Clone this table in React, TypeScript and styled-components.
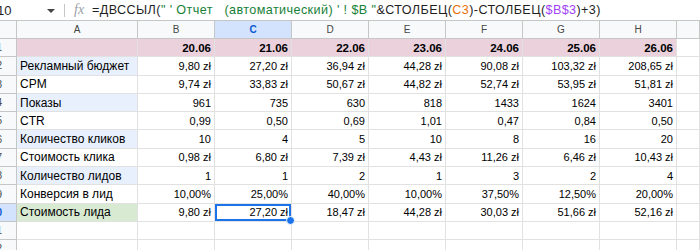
import React from "react";
import styled, { createGlobalStyle } from "styled-components";

const Global = createGlobalStyle`
  html, body { margin: 0; padding: 0; background: #fff; overflow: hidden; }
  body { font-family: "Liberation Sans", Arial, sans-serif; }
`;

const Page = styled.div`
  width: 700px;
  height: 250px;
  overflow: hidden;
  display: flex;
  flex-direction: column;
`;

const FormulaBar = styled.div`
  height: 21px;
  flex: none;
  display: flex;
  align-items: center;
  border-bottom: 1px solid #c4c7c5;
  box-sizing: border-box;
  font-size: 12px;
  color: #1f1f1f;
`;

const NameBox = styled.div`
  width: 47px;
  font-size: 13px;
  margin-left: -3px;
`;

const Caret = styled.div`
  width: 0;
  height: 0;
  border-left: 4px solid transparent;
  border-right: 4px solid transparent;
  border-top: 4px solid #444;
  margin-left: 3px;
  margin-top: 1px;
`;

const Divider = styled.div`
  width: 1px;
  height: 13px;
  background: #c4c7c5;
  margin-left: 9px;
`;

const Fx = styled.div`
  font-family: "Liberation Serif", serif;
  font-style: italic;
  color: #9aa0a6;
  font-size: 14px;
  margin-left: 9px;
  width: 18px;
`;

const Formula = styled.div`
  white-space: pre;
  font-size: 12.6px;
  letter-spacing: 0.4px;
  color: #1f1f1f;
`;

const Tok = styled.span<{ $c?: string }>`
  color: ${(p) => p.$c || "#1f1f1f"};
`;

const Grid = styled.div`
  display: grid;
  grid-template-columns: 17px 121px repeat(7, 77px) 1fr;
  grid-template-rows: 18px;
  grid-auto-rows: 18.3px;
`;

const Cell = styled.div<{
  $bg?: string;
  $bold?: boolean;
  $align?: "left" | "right" | "center";
  $selected?: boolean;
  $size?: number;
}>`
  position: relative;
  box-sizing: border-box;
  border-right: 1px solid #e1e1e1;
  border-bottom: 1px solid #e1e1e1;
  background: ${(p) => p.$bg || "#fff"};
  font-weight: ${(p) => (p.$bold ? 700 : 400)};
  font-size: ${(p) => p.$size || 11}px;
  color: #000;
  display: flex;
  align-items: center;
  justify-content: ${(p) =>
    p.$align === "left" ? "flex-start" : p.$align === "center" ? "center" : "flex-end"};
  padding: 0 3px;
  white-space: nowrap;
  overflow: visible;
  ${(p) =>
    p.$selected &&
    `
    box-shadow: inset 0 0 0 2px #1a73e8;
    z-index: 2;
    &::after {
      content: "";
      position: absolute;
      right: -4px;
      bottom: -4px;
      width: 7px;
      height: 7px;
      border-radius: 50%;
      background: #1a73e8;
      border: 1px solid #fff;
    }
  `}
`;

const ColHead = styled.div<{ $active?: boolean }>`
  box-sizing: border-box;
  background: ${(p) => (p.$active ? "#d3e3fd" : "#f8f9fa")};
  border-right: 1px solid #c4c7c5;
  border-bottom: 1px solid #c4c7c5;
  font-size: 10px;
  color: ${(p) => (p.$active ? "#0b57d0" : "#444746")};
  font-weight: ${(p) => (p.$active ? 700 : 400)};
  display: flex;
  align-items: center;
  justify-content: center;
`;

const RowHead = styled.div<{ $active?: boolean }>`
  box-sizing: border-box;
  background: ${(p) => (p.$active ? "#d3e3fd" : "#f8f9fa")};
  border-right: 1px solid #c4c7c5;
  border-bottom: 1px solid #c4c7c5;
  font-size: 10px;
  color: ${(p) => (p.$active ? "#0b57d0" : "#444746")};
  font-weight: ${(p) => (p.$active ? 700 : 400)};
  display: flex;
  align-items: center;
  justify-content: flex-end;
  padding-right: 14px;
  overflow: hidden;
`;

const cols = ["A", "B", "C", "D", "E", "F", "G", "H", ""];
const dates = ["20.06", "21.06", "22.06", "23.06", "24.06", "25.06", "26.06"];

const rows: { label: string; vals: string[]; bg: string }[] = [
  { label: "Рекламный бюджет", vals: ["9,80 zł", "27,20 zł", "36,94 zł", "44,28 zł", "90,08 zł", "103,32 zł", "208,65 zł"], bg: "#e8f0fe" },
  { label: "CPM", vals: ["9,74 zł", "33,83 zł", "50,67 zł", "44,82 zł", "52,74 zł", "53,95 zł", "51,81 zł"], bg: "#fff" },
  { label: "Показы", vals: ["961", "735", "630", "818", "1433", "1624", "3401"], bg: "#e8f0fe" },
  { label: "CTR", vals: ["0,99", "0,50", "0,69", "1,01", "0,47", "0,84", "0,50"], bg: "#fff" },
  { label: "Количество кликов", vals: ["10", "4", "5", "10", "8", "16", "20"], bg: "#e8f0fe" },
  { label: "Стоимость клика", vals: ["0,98 zł", "6,80 zł", "7,39 zł", "4,43 zł", "11,26 zł", "6,46 zł", "10,43 zł"], bg: "#fff" },
  { label: "Количество лидов", vals: ["1", "1", "2", "1", "3", "2", "4"], bg: "#e8f0fe" },
  { label: "Конверсия в лид", vals: ["10,00%", "25,00%", "40,00%", "10,00%", "37,50%", "12,50%", "20,00%"], bg: "#fff" },
  { label: "Стоимость лида", vals: ["9,80 zł", "27,20 zł", "18,47 zł", "44,28 zł", "30,03 zł", "51,66 zł", "52,16 zł"], bg: "#d9ead3" },
];

export default function App() {
  return (
    <Page>
      <Global />
      <FormulaBar>
        <NameBox>10</NameBox>
        <Caret />
        <Divider />
        <Fx>fx</Fx>
        <Formula>
          <Tok>=ДВССЫЛ(</Tok>
          <Tok $c="#188038">{"\" ' Отчет   (автоматический) ' ! $B \""}</Tok>
          <Tok>&amp;СТОЛБЕЦ(</Tok>
          <Tok $c="#e8710a">C3</Tok>
          <Tok>)-СТОЛБЕЦ(</Tok>
          <Tok $c="#a142f4">$B$3</Tok>
          <Tok>)+3)</Tok>
        </Formula>
      </FormulaBar>
      <Grid>
        <ColHead />
        {cols.map((c, i) => (
          <ColHead key={i} $active={c === "C"}>
            {c}
          </ColHead>
        ))}

        <RowHead>1</RowHead>
        <Cell $bg="#ead1dc" />
        {dates.map((d) => (
          <Cell key={d} $bg="#ead1dc" $bold $size={11.5}>
            {d}
          </Cell>
        ))}
        <Cell />

        {rows.map((r, ri) => {
          const n = ri + 2;
          return (
            <React.Fragment key={n}>
              <RowHead $active={n === 10}>{n}</RowHead>
              <Cell $bg={r.bg} $align="left" $size={12}>
                {r.label}
              </Cell>
              {r.vals.map((v, vi) => (
                <Cell key={vi} $selected={n === 10 && vi === 1}>
                  {v}
                </Cell>
              ))}
              <Cell />
            </React.Fragment>
          );
        })}

        {[11, 12].map((n) => (
          <React.Fragment key={n}>
            <RowHead>{n}</RowHead>
            {cols.map((_, i) => (
              <Cell key={i} />
            ))}
          </React.Fragment>
        ))}
      </Grid>
    </Page>
  );
}
